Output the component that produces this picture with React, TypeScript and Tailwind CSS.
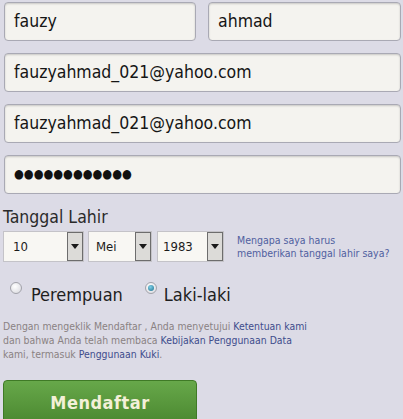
import React from "react";

const font = { fontFamily: '"DejaVu Sans Condensed", "DejaVu Sans", Tahoma, sans-serif' };

function Field({ children, className = "" }: { children: React.ReactNode; className?: string }) {
  return (
    <div
      className={`h-[39px] rounded-[4px] border border-[#a9a9b4] bg-[#f4f3ef] pl-[9px] flex items-center text-[17.5px] text-[#151515] shadow-[inset_0_1px_2px_rgba(0,0,0,0.18)] ${className}`}
    >
      {children}
    </div>
  );
}

function Select({ value, w, textPl }: { value: string; w: string; textPl: string }) {
  return (
    <div className={`h-[31px] ${w} flex border border-[#c4c3c8] bg-[#f8f7f3]`}>
      <div className={`flex-1 flex items-center ${textPl} text-[13px] text-[#1b1b1b]`}>{value}</div>
      <div className="w-[16px] h-full border border-[#6d6d6d] bg-[#dcdbd8] flex items-center justify-center">
        <svg width="8" height="5" viewBox="0 0 8 5">
          <path d="M0 0 L8 0 L4 5 Z" fill="#1a1a1a" />
        </svg>
      </div>
    </div>
  );
}

function Radio({ checked }: { checked?: boolean }) {
  return (
    <div className="w-[12px] h-[12px] rounded-full border border-[#a2a2aa] bg-[radial-gradient(circle_at_40%_35%,#ffffff,#d6d6dc)] flex items-center justify-center">
      {checked && <div className="w-[6px] h-[6px] rounded-full bg-[radial-gradient(circle_at_40%_35%,#7fd0e8,#1f6f8c)]" />}
    </div>
  );
}

export default function App() {
  return (
    <div style={font} className="w-[403px] h-[419px] overflow-hidden bg-[#dcdbe6] pl-[4px] pr-[2px] pt-[2px]">
      <div className="flex flex-col gap-[12px]">
        <div className="flex gap-[12px]">
          <Field className="w-[192px]">fauzy</Field>
          <Field className="flex-1">ahmad</Field>
        </div>
        <Field>fauzyahmad_021@yahoo.com</Field>
        <Field>fauzyahmad_021@yahoo.com</Field>
        <Field>
          <span className="text-[12.5px] text-[#111]">●●●●●●●●●●●●</span>
        </Field>
      </div>

      <div className="-ml-px mt-[13px] text-[17.5px] leading-[20px] text-[#2a2a2a]">Tanggal Lahir</div>

      <div className="-ml-px mt-[4px] flex items-start">
        <Select value="10" w="w-[81px]" textPl="pl-[9px]" />
        <div className="w-[4px]" />
        <Select value="Mei" w="w-[64px]" textPl="pl-[7px]" />
        <div className="w-[5px]" />
        <Select value="1983" w="w-[67px]" textPl="pl-[5px]" />
        <div className="ml-[13px] mt-[3px] text-[10.5px] leading-[13px] text-[#5060a0] whitespace-nowrap">
          Mengapa saya harus
          <br />
          memberikan tanggal lahir saya?
        </div>
      </div>

      <div className="mt-[22px] flex items-start text-[18px] leading-[22px] text-[#1e1e1e]">
        <div className="ml-[6px] -mt-[2px]"><Radio /></div>
        <span className="ml-[9px]">Perempuan</span>
        <div className="ml-[22px] -mt-[2px]"><Radio checked /></div>
        <span className="ml-[7px]">Laki-laki</span>
      </div>

      <div className="-ml-px mt-[13px] whitespace-nowrap text-[10.4px] leading-[14px] text-[#8a8283]">
        Dengan mengeklik Mendaftar , Anda menyetujui <span className="text-[#3e4c8c]">Ketentuan kami</span>
        <br />
        dan bahwa Anda telah membaca <span className="text-[#3e4c8c]">Kebijakan Penggunaan Data</span>
        <br />
        kami, termasuk <span className="text-[#3e4c8c]">Penggunaan Kuki</span>.
      </div>

      <button className="-ml-px mt-[19px] w-[194px] h-[44px] rounded-[4px] border border-[#3f7a26] bg-[linear-gradient(#67a84a,#4b8830)] shadow-[0_1px_0_rgba(255,255,255,0.6)] flex justify-center pt-[11px]">
        <span className="text-[18px] font-bold tracking-[0.5px] text-[#f3f0d8] leading-[22px]">Mendaftar</span>
      </button>
    </div>
  );
}
